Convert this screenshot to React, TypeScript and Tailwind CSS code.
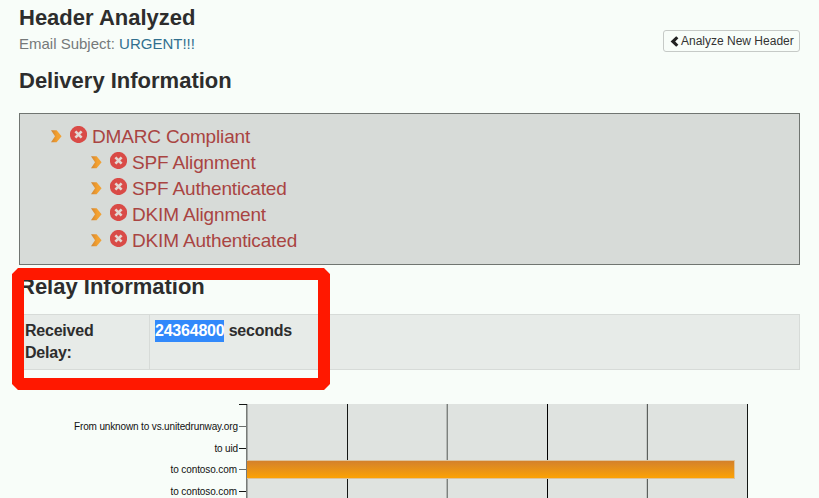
import React from "react";

const checks = [
  { label: "DMARC Compliant", child: false },
  { label: "SPF Alignment", child: true },
  { label: "SPF Authenticated", child: true },
  { label: "DKIM Alignment", child: true },
  { label: "DKIM Authenticated", child: true },
];

function Bullet() {
  return (
    <svg width="11" height="13" viewBox="0 0 11 13" className="mt-[7px] shrink-0">
      <defs>
        <linearGradient id="bullet" x1="0" y1="0" x2="1" y2="0">
          <stop offset="0" stopColor="#cf8434" />
          <stop offset="0.6" stopColor="#f4a12f" />
          <stop offset="1" stopColor="#eda23c" />
        </linearGradient>
      </defs>
      <path d="M0 0.2H5.6L10.6 6.3L5.6 12.3H0L4 6.3Z" fill="url(#bullet)" />
    </svg>
  );
}

function ErrorIcon() {
  return (
    <svg width="17" height="17" viewBox="0 0 17 17" className="mt-[3px] ml-2 shrink-0">
      <circle cx="8.5" cy="8.5" r="8.6" fill="#d94b47" />
      <path d="M5.4 5.4L11.6 11.6M11.6 5.4L5.4 11.6" stroke="#e3d8d3" strokeWidth="2.7" />
    </svg>
  );
}

function Check({ label, child }: { label: string; child: boolean }) {
  return (
    <li className={`flex h-[26px] ${child ? "pl-[71px]" : "pl-[31px]"}`}>
      <Bullet />
      <ErrorIcon />
      <span className="mt-px ml-[5px] whitespace-nowrap text-[19px] leading-[26px] tracking-[-0.16px] text-[#a94442]">{label}</span>
    </li>
  );
}

const rows = [
  { label: "From unknown to vs.unitedrunway.org", y: 426.5, right: 238, width: 164 },
  { label: "to uid", y: 448.5, right: 238, width: 23.5 },
  { label: "to contoso.com", y: 469.5, right: 237, width: 66.5 },
  { label: "to contoso.com", y: 491.5, right: 237, width: 66.5 },
];

const gridlines = [
  { x: 347, color: "#141715", edge: "#dfe3e0" },
  { x: 447, color: "#7d817e", edge: "#b4b8b5" },
  { x: 547, color: "#000000", edge: "#dfe3e0" },
  { x: 647, color: "#5c605d", edge: "#c5c9c6" },
  { x: 747, color: "#141715", edge: "#dfe3e0" },
];

function DelayChart() {
  return (
    <svg width="819" height="108" viewBox="0 390 819 108" className="block">
      <defs>
        <linearGradient id="bar" x1="0" y1="0" x2="0" y2="1">
          <stop offset="0" stopColor="#d4812b" />
          <stop offset="1" stopColor="#fca204" />
        </linearGradient>
      </defs>
      <rect x="247" y="404" width="501" height="94" fill="#dfe3e0" />
      {gridlines.map((g) => (
        <g key={g.x}>
          <rect x={g.x - 1} y="404" width="1" height="94" fill={g.edge} />
          <rect x={g.x} y="404" width="1" height="94" fill={g.color} />
        </g>
      ))}
      <rect x="246" y="404" width="1" height="94" fill="#777b78" />
      <rect x="247" y="404" width="1" height="94" fill="#a5a9a6" />
      <rect x="239" y="404" width="8" height="1" fill="#141715" />
      <rect x="247" y="460" width="488" height="19" fill="#dcc39e" />
      <rect x="247" y="461" width="487" height="17" fill="url(#bar)" />
      {rows.map((r, i) => (
        <g key={i}>
          <rect x="239" y={r.y - 0.5} width="7" height="1" fill={i % 2 ? "#141715" : "#6b6f6c"} />
          <text x={r.right} y={r.y + 3} textAnchor="end" fontSize="10" fill="#111" textLength={r.width}>
            {r.label}
          </text>
        </g>
      ))}
    </svg>
  );
}

export default function App() {
  return (
    <div className="relative h-[498px] w-[819px] overflow-hidden bg-[#f8fdf9] font-['Liberation_Sans',Arial,sans-serif] text-[#2d2d2d]">
      <header className="flex h-[57px] justify-between pr-[19px] pl-[19px]">
        <div className="pt-1">
          <h2 className="text-[22px] leading-[27px] font-bold">Header Analyzed</h2>
          <p className="text-[15px] leading-[25px] text-[#75797a]">
            Email Subject: <span className="text-[#31708f]">URGENT!!!</span>
          </p>
        </div>
        <button className="mt-[30px] flex h-[22px] w-[137px] items-center rounded-[3px] border border-[#c6cac7] pl-[6px] text-[12px] whitespace-nowrap text-[#333]">
          <svg width="9" height="11" viewBox="0 0 9 11" className="mr-[2px] shrink-0">
            <path d="M6.2 0.2L8.4 2.3L5.2 5.5L8.4 8.7L6.2 10.8L0.6 5.5Z" fill="#222" />
          </svg>
          Analyze New Header
        </button>
      </header>
      <h2 className="h-14 pt-[10px] pl-[19px] text-[22px] leading-[27px] font-bold">Delivery Information</h2>
      <ul className="mr-[19px] ml-[19px] h-[152px] border border-[#707571] bg-[#d7dbd8] pt-[9px]">
        {checks.map((c) => (
          <Check key={c.label} {...c} />
        ))}
      </ul>
      <h2 className="h-[49px] pt-2 pl-[19px] text-[22px] leading-[27px] font-bold">Relay Information</h2>
      <div className="mr-[19px] ml-[19px] flex h-14 border border-[#d7dbd8] bg-[#e7ebe8] text-[16px] leading-[22px] font-bold tracking-[-0.22px]">
        <div className="w-[130px] border-r border-[#d7dbd8] pt-[5px] pl-[5px]">
          Received
          <br />
          Delay:
        </div>
        <div className="pt-[5px] pl-[5px]">
          <span className="inline-block h-[22px] bg-[#3189fb] text-white">24364800</span> seconds
        </div>
      </div>
      <div className="mt-5">
        <DelayChart />
      </div>
      <svg width="318" height="122" viewBox="0 0 318 122" className="absolute top-[268px] left-[12px]">
        <path
          fillRule="evenodd"
          fill="#ff1800"
          d="M6 0H312L318 6V116L312 122H6L0 116V6ZM12 12V110H306V12Z"
        />
      </svg>
    </div>
  );
}
